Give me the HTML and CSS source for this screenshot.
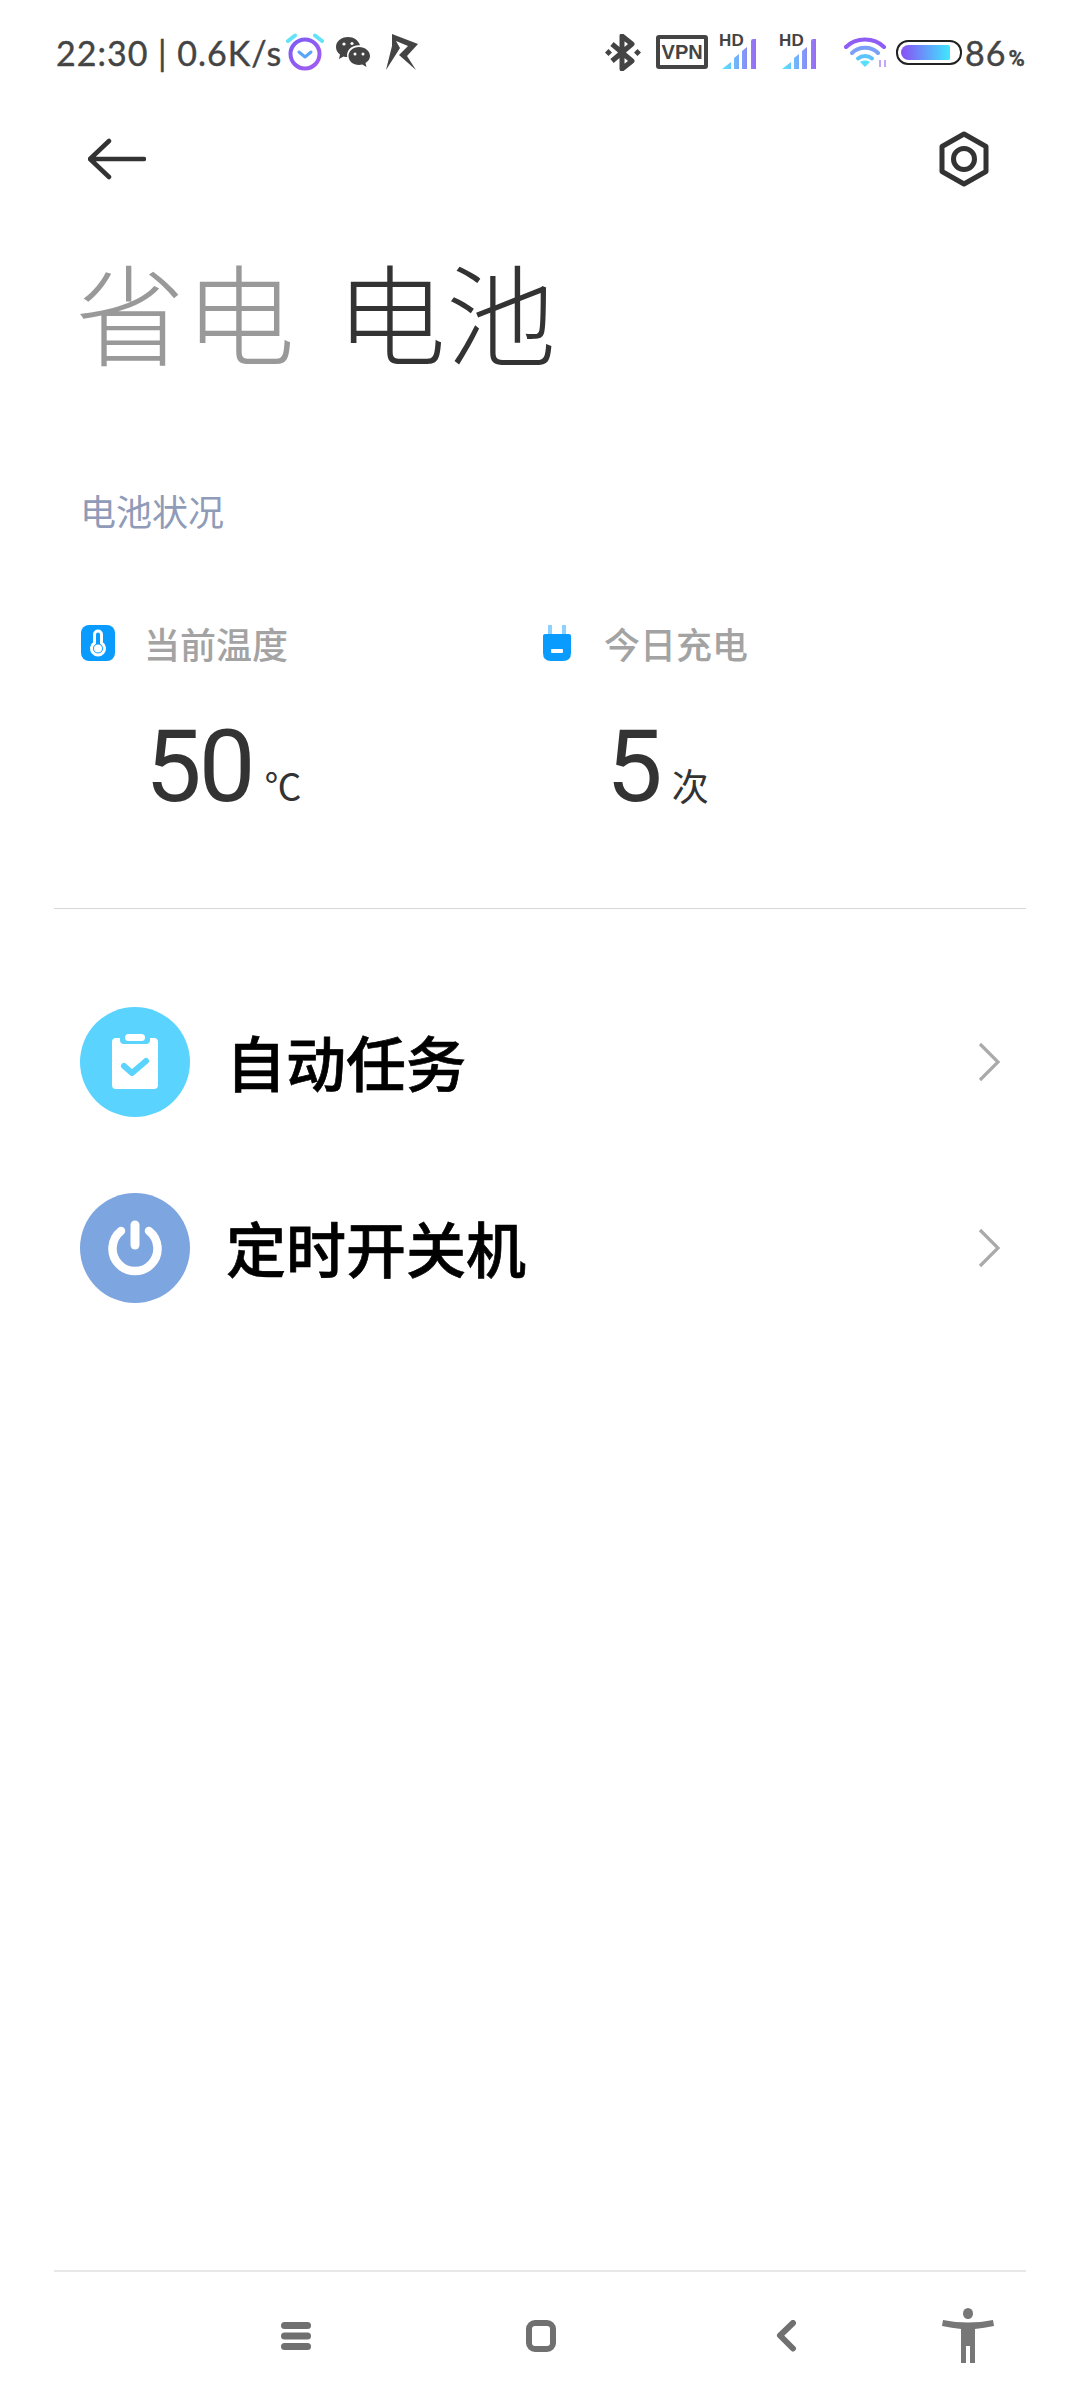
FILE: index.html
```html
<!DOCTYPE html>
<html lang="zh-CN">
<head>
	<meta charset="UTF-8">
	<title>电池</title>
	<link rel="stylesheet" href="styles.css">
</head>
<body>
<div class="page">
	<!-- 状态栏 -->
	<div class="status">
		<span class="status-text">22:30 | 0.6K/s</span>
		<svg class="ic-alarm" width="38" height="38" viewBox="0 0 38 38">
			<defs>
				<linearGradient id="alarmRing" x1="0" y1="0" x2="1" y2="1">
					<stop offset="0" stop-color="#7a5cf5"/>
					<stop offset="1" stop-color="#a45cf0"/>
				</linearGradient>
			</defs>
			<path d="M2 8 L9 2.500M36 8 L29 2.500" stroke="#62e3f7" stroke-width="4" stroke-linecap="round" fill="none"/>
			<circle cx="19" cy="21" r="14.500" fill="none" stroke="url(#alarmRing)" stroke-width="4"/>
			<path d="M13 19 L19 24 L25 19" stroke="#5aa5f7" stroke-width="3" stroke-linecap="round" stroke-linejoin="round" fill="none"/>
		</svg>
		<svg class="ic-wechat" width="36" height="32" viewBox="0 0 36 32">
			<path d="M13 1C6 1 1 5.500 1 11c0 3 1.500 5.500 4 7.500L4 23l4.500-2.500c1.200 .4 2.400 .6 3.700 .6C11 14 17 8.500 25 9.200 23.500 4.500 18.800 1 13 1z" fill="#444"/>
			<path d="M24 11c-6 0-10.500 4-10.500 9s4.500 9 10.500 9c1.200 0 2.300-.2 3.300-.5L31.500 31l-1-4c2.800-1.700 4.500-4.200 4.500-7 0-5-4.800-9-11-9z" fill="#444"/>
			<circle cx="9" cy="8" r="1.600" fill="#fff"/>
			<circle cx="17" cy="7.500" r="1.600" fill="#fff"/>
			<circle cx="20" cy="18" r="1.500" fill="#fff"/>
			<circle cx="28" cy="18" r="1.500" fill="#fff"/>
		</svg>
		<svg class="ic-r" width="34" height="37" viewBox="0 0 34 37">
			<path d="M7 0 L33 10 L22 22 L31 36 L14 21 L23 12 L11 7 L15 14 L1 36 L7 12 Z" fill="#444"/>
		</svg>

		<svg class="ic-bt" width="36" height="37" viewBox="0 0 36 37">
			<path d="M7 10 L27 27 L17 35 L17 2 L27 10 L7 27" stroke="#444" stroke-width="5" stroke-linejoin="round" fill="none"/>
			<path d="M0 18.500l3.500-3.500 3.500 3.500-3.500 3.500zM29 18.500l3.500-3.500 3.500 3.500-3.500 3.500z" fill="#444"/>
		</svg>
		<span class="vpn">VPN</span>
		<div class="signal sig-a">
			<span class="hd">HD</span>
			<svg width="38" height="31" viewBox="0 0 38 31">
				<defs>
					<linearGradient id="bars" x1="0" y1="0" x2="1" y2="0">
						<stop offset="0" stop-color="#55e8fb"/>
						<stop offset="1" stop-color="#9a6cf5"/>
					</linearGradient>
				</defs>
				<path d="M3 30 L12 23 L12 30 Z M15 30 L15 19 L20 15 L20 30 Z M23 30 L23 12 L28 8 L28 30 Z M32 30 L32 2 Q32 0 34 0 L37 0 L37 30 Z" fill="url(#bars)"/>
			</svg>
		</div>
		<div class="signal sig-b">
			<span class="hd">HD</span>
			<svg width="38" height="31" viewBox="0 0 38 31">
				<path d="M3 30 L12 23 L12 30 Z M15 30 L15 19 L20 15 L20 30 Z M23 30 L23 12 L28 8 L28 30 Z M32 30 L32 2 Q32 0 34 0 L37 0 L37 30 Z" fill="url(#bars)"/>
			</svg>
		</div>
		<svg class="ic-wifi" width="44" height="32" viewBox="0 0 44 32">
			<path d="M2 11 C12 1 30 1 40 11" stroke="#8f5cf5" stroke-width="4" stroke-linecap="round" fill="none"/>
			<path d="M8 17 C15 10 27 10 34 17" stroke="#7aa0f7" stroke-width="4" stroke-linecap="round" fill="none"/>
			<path d="M14 22.500 C18 19 24 19 28 22.500" stroke="#5cc4fa" stroke-width="4" stroke-linecap="round" fill="none"/>
			<path d="M16 26 L21 31 L26 26 C23 24 19 24 16 26z" fill="#58e0fb"/>
			<path d="M36 24v7M41 24v7" stroke="#c3a6f5" stroke-width="2"/>
		</svg>
		<div class="battery"><div class="battery-fill"></div></div>
		<span class="status-text pct">86<small>%</small></span>
	</div>

	<!-- 标题栏 -->
	<div class="topbar">
		<svg width="58" height="42" viewBox="0 0 58 42">
			<path d="M21 3 L2 21 L21 39 M2 21 L56 21" stroke="#333" stroke-width="4.500" stroke-linecap="round" stroke-linejoin="round" fill="none"/>
		</svg>
		<svg width="52" height="56" viewBox="0 0 52 56">
			<path d="M26 3 L48 15.500 L48 40.500 L26 53 L4 40.500 L4 15.500 Z" stroke="#333" stroke-width="5" stroke-linejoin="round" fill="none"/>
			<circle cx="26" cy="28" r="10.500" stroke="#333" stroke-width="5" fill="none"/>
		</svg>
	</div>

	<div class="title">
		<span class="tab-off">省电</span>
		<span class="tab-on">电池</span>
	</div>

	<div class="section-name">电池状况</div>

	<div class="stats">
		<div class="stat">
			<div class="stat-head">
				<svg width="34" height="36" viewBox="0 0 34 36">
					<rect width="34" height="36" rx="8" fill="#0a9bff"/>
					<path d="M17 6 a3.500 3.500 0 0 1 3.500 3.500 V18 a6.500 6.500 0 1 1 -7 0 V9.500 A3.500 3.500 0 0 1 17 6z" fill="none" stroke="#fff" stroke-width="3"/>
					<circle cx="17" cy="23.500" r="4" fill="#fff"/>
				</svg>
				<span>当前温度</span>
			</div>
			<div class="stat-value">50<small>℃</small></div>
		</div>
		<div class="stat stat-charge">
			<div class="stat-head">
				<svg width="30" height="36" viewBox="0 0 30 36">
					<path d="M6 0h4v9H6zM20 0h4v9h-4z" fill="#8ed0ff"/>
					<path d="M1 11 Q1 9 3 9 H27 Q29 9 29 11 V28 Q29 36 21 36 H9 Q1 36 1 28 Z" fill="#0a9bff"/>
					<rect x="9" y="24" width="12" height="4" rx="1" fill="#fff"/>
				</svg>
				<span>今日充电</span>
			</div>
			<div class="stat-value">5<small>次</small></div>
		</div>
	</div>

	<div class="divider"></div>

	<div class="menu">
		<div class="menu-row">
			<div class="menu-ic ic-blue">
				<svg width="50" height="56" viewBox="0 0 50 56">
					<path d="M6 4 H10 V6 Q10 10 14 10 H36 Q40 10 40 6 V4 H44 Q48 4 48 8 V51 Q48 55 44 55 H6 Q2 55 2 51 V8 Q2 4 6 4z" fill="#fff"/>
					<rect x="15" y="0" width="20" height="7" rx="3.500" fill="#fff"/>
					<path d="M14 32 L22 39 L36 27" stroke="#5ad4ff" stroke-width="6" stroke-linecap="round" stroke-linejoin="round" fill="none"/>
				</svg>
			</div>
			<span class="menu-text">自动任务</span>
			<svg class="chevron" width="22" height="40" viewBox="0 0 22 40">
				<path d="M2 2 L20 20 L2 38" stroke="#aaa" stroke-width="3.200" fill="none"/>
			</svg>
		</div>
		<div class="menu-row">
			<div class="menu-ic ic-navy">
				<svg width="56" height="56" viewBox="0 0 56 56">
					<path d="M14 11 A22.500 22.500 0 1 0 42 11" stroke="#fff" stroke-width="8.500" stroke-linecap="round" fill="none"/>
					<path d="M28 5 V25" stroke="#fff" stroke-width="9" stroke-linecap="round"/>
				</svg>
			</div>
			<span class="menu-text">定时开关机</span>
			<svg class="chevron" width="22" height="40" viewBox="0 0 22 40">
				<path d="M2 2 L20 20 L2 38" stroke="#aaa" stroke-width="3.200" fill="none"/>
			</svg>
		</div>
	</div>

	<!-- 底部导航 -->
	<div class="navbar">
		<svg class="nav-menu" width="30" height="28" viewBox="0 0 30 28">
			<rect y="0" width="30" height="7" rx="3.500" fill="#707070"/>
			<rect y="10.500" width="30" height="7" rx="3.500" fill="#707070"/>
			<rect y="21" width="30" height="7" rx="3.500" fill="#707070"/>
		</svg>
		<svg class="nav-home" width="30" height="32" viewBox="0 0 30 32">
			<rect x="3" y="3" width="24" height="26" rx="6" stroke="#707070" stroke-width="6" fill="none"/>
		</svg>
		<svg class="nav-back" width="22" height="32" viewBox="0 0 22 32">
			<path d="M18 3 L5 15.500 L18 28.500" stroke="#707070" stroke-width="6" stroke-linecap="round" stroke-linejoin="round" fill="none"/>
		</svg>
		<svg class="nav-person" width="52" height="56" viewBox="0 0 52 56">
			<ellipse cx="26" cy="5.500" rx="5" ry="5.500" fill="#777"/>
			<path d="M1 12 Q26 17 51 12 L52 18 Q42 20 33 21 V55 H28 V38 H24 V55 H19 V21 Q10 20 0 18 Z" fill="#777"/>
		</svg>
	</div>
</div>
</body>
</html>
```

FILE: styles.css
```css
* {
    margin: 0;
    padding: 0;
    box-sizing: border-box;
}

body {
    background-color: #fff;
    font-family: "Noto Sans CJK SC", sans-serif;
}

.page {
    width: 1080px;
    height: 2400px;
    display: flex;
    flex-direction: column;
}

/* status bar */
.status {
    height: 104px;
    padding-left: 56px;
    display: flex;
    align-items: center;
    color: #444;
}

.status-text {
    font-family: "Lato", sans-serif;
    font-size: 34px;
    letter-spacing: 1px;
    white-space: pre;
    -webkit-text-stroke: 0.4px #444;
}

.status svg {
    flex: none;
}

.ic-alarm {
    margin-left: 4px;
}

.ic-wechat {
    margin-left: 11px;
}

.ic-r {
    margin-left: 14px;
}

.ic-bt {
    margin-left: 186px;
}

.vpn {
    width: 52px;
    height: 34px;
    margin-left: 15px;
    border: 4px solid #444;
    border-radius: 3px;
    font-family: "Liberation Sans", sans-serif;
    font-size: 20px;
    font-weight: bold;
    line-height: 26px;
    text-align: center;
}

.signal {
    width: 38px;
    height: 36px;
    position: relative;
    display: flex;
    align-items: flex-end;
}

.sig-a {
    margin-left: 11px;
}

.sig-b {
    margin-left: 22px;
}

.hd {
    position: absolute;
    left: 0;
    top: -2px;
    font-family: "Liberation Sans", sans-serif;
    font-size: 17px;
    font-weight: bold;
    line-height: 17px;
}

.ic-wifi {
    margin-left: 27px;
}

.battery {
    width: 66px;
    height: 25px;
    margin-left: 8px;
    padding: 3px 10px 3px 3px;
    border: 2px solid #222;
    border-radius: 12px;
}

.battery-fill {
    height: 100%;
    border-radius: 8px 2px 2px 8px;
    background: linear-gradient(to right, #8a4ff5, #3fe8ff);
}

.pct {
    margin-left: 3px;
}

.pct small {
    font-family: "Roboto", sans-serif;
    font-size: 22px;
    font-weight: bold;
    margin-left: 2px;
}

/* top bar */
.topbar {
    height: 110px;
    padding: 0 90px 0 88px;
    display: flex;
    justify-content: space-between;
    align-items: center;
}

.title {
    padding-left: 75px;
    margin-top: 21px;
    display: flex;
    gap: 41px;
    font-size: 110px;
    line-height: 150px;
    font-weight: 300;
}

.tab-off {
    color: #999;
}

.tab-on {
    color: #333;
}

.section-name {
    margin-top: 100px;
    padding-left: 80px;
    font-size: 36px;
    line-height: 50px;
    color: #8f9bb8;
}

.stats {
    margin-top: 89px;
    padding-left: 81px;
    display: grid;
    grid-template-columns: 461px 1fr;
}

.stat-head {
    height: 38px;
    display: flex;
    align-items: center;
    font-size: 36px;
    font-weight: 500;
    color: #a3a3a3;
}

.stat-head svg {
    flex: none;
    margin-right: 29px;
}

.stat-charge .stat-head svg {
    margin-right: 32px;
}

.stat-value {
    margin-top: 55px;
    padding-left: 64px;
    font-family: "Roboto", sans-serif;
    font-size: 101px;
    letter-spacing: -3px;
    line-height: 100px;
    color: #333;
    display: flex;
    align-items: baseline;
}

.stat-value small {
    margin-left: 12px;
    font-family: "Noto Sans CJK SC", sans-serif;
    font-size: 37px;
    letter-spacing: 0;
    font-weight: 400;
}

.divider {
    margin: 73px 54px 0;
    height: 1px;
    background-color: #d8d8d8;
}

.menu {
    margin-top: 98px;
    padding: 0 80px 0 80px;
    display: flex;
    flex-direction: column;
    gap: 76px;
}

.menu-row {
    height: 110px;
    display: flex;
    align-items: center;
}

.menu-ic {
    width: 110px;
    height: 110px;
    border-radius: 50%;
    flex: none;
    display: flex;
    align-items: center;
    justify-content: center;
}

.ic-blue {
    background-color: #5ad4ff;
}

.ic-navy {
    background-color: #7da5df;
}

.menu-text {
    margin-left: 36px;
    padding-bottom: 3px;
    flex: 1;
    font-size: 60px;
    font-weight: 500;
    -webkit-text-stroke: 0.7px #000;
    color: #000;
}

/* bottom nav */
.navbar {
    margin: auto 54px 0;
    height: 130px;
    border-top: 2px solid #e8e8e8;
    display: flex;
    align-items: center;
}

.navbar svg {
    flex: none;
}

.nav-menu {
    margin-left: 227px;
}

.nav-home {
    margin-left: 215px;
}

.nav-back {
    margin-left: 219px;
}

.nav-person {
    margin-left: 145px;
}
```
